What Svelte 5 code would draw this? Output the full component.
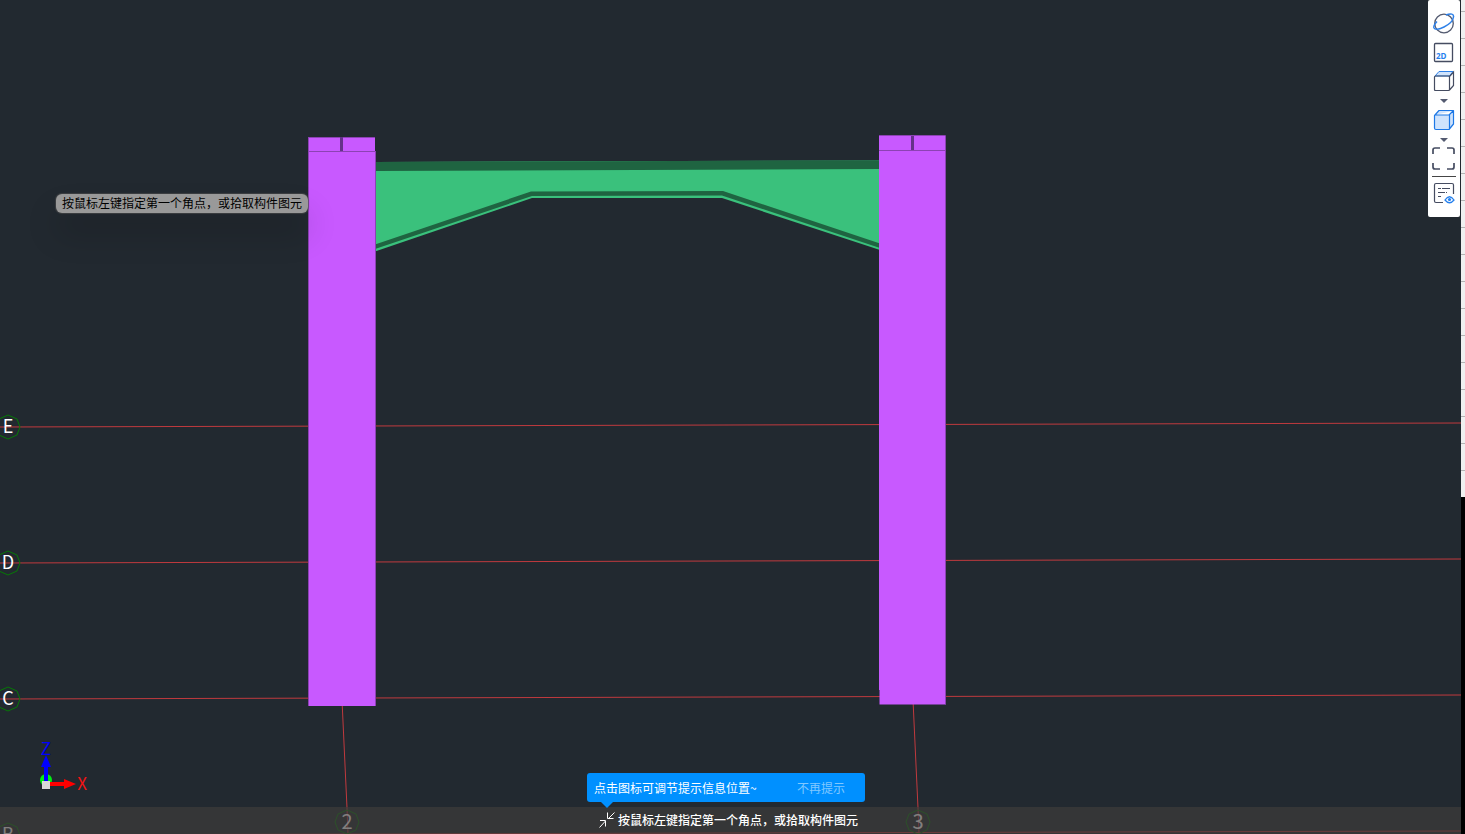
<script>
  let message = '按鼠标左键指定第一个角点，或拾取构件图元'
  let showHint = true

  const rows = [
    { name: 'E', y: 427, end: 423 },
    { name: 'D', y: 563, end: 559 },
    { name: 'C', y: 699, end: 695 },
    { name: 'B', y: 835, end: 831 }
  ]

  const columns = [
    { name: '2', x: 347, top: 342 },
    { name: '3', x: 918, top: 913 }
  ]

  function octagon(cx, cy) {
    return [
      [0, -12], [9, -8], [12, 0], [9, 8],
      [0, 12], [-9, 8], [-12, 0], [-9, -8]
    ].map(([x, y]) => `${cx + x},${cy + y}`).join(' ')
  }
</script>

<main>
  <section class="viewport">
    <svg class="scene" viewBox="0 0 1461 834" preserveAspectRatio="xMinYMin slice" role="img" aria-label="3D">
      <g class="grid">
        {#each rows as row}
          <line x1="0" y1={row.y} x2="1461" y2={row.end} />
        {/each}
        {#each columns as col}
          <line x1={col.top} y1="700" x2={col.x} y2="808" />
          <line x1={col.x} y1="808" x2={col.x + 1} y2="834" />
        {/each}
      </g>

      <g class="bubbles">
        {#each rows as row}
          <polygon points={octagon(8, row.y)} />
          <text x="8" y={row.y + 6}>{row.name}</text>
        {/each}
        {#each columns as col}
          <polygon points={octagon(col.x, 822)} />
          <text class="number" x={col.x} y="829">{col.name}</text>
        {/each}
      </g>

      <!-- haunched beam -->
      <path fill="#3ac17c" d="M375 162 L880 160.500 V250 L722 198 L532 198 L375 251.500 Z" />
      <path fill="#1f6441" d="M375 162 L880 160.500 V169 L375 171 Z" />
      <path fill="#1f6441" d="M375 244.500 L531 191.500 L723 191 L880 243.500 V248 L722 195.500 L532 196 L375 249 Z" />

      <!-- columns -->
      <path fill="#c859ff" d="M308 137 H375 V151 H375.500 V706 H308.500 V691 H308 Z" />
      <path fill="#c859ff" d="M879 135.500 H945.500 V150 H946 V704.500 H879.500 V690 H879 Z" />
      <g fill="none" stroke="#8c42b3">
        <path d="M308 137.500 H375 M308 151.500 H375.500 M375.500 151 V706 M308.500 137 V706" />
        <path d="M879 135.500 H945.500 M879 150.500 H946 M945.500 136 V704" />
      </g>
      <path fill="#65318a" d="M340 137 h3 v14 h-3 z M911 136 h3 v14 h-3 z" />

      <!-- axis gizmo -->
      <circle cx="46" cy="780" r="6" fill="#00ee14" />
      <path fill="#0000ff" d="M44 781 V767 H41 L46 755 L51 767 H48 V781 Z" />
      <path fill="#ff0000" d="M49 782 H64 V779 L76 784 L64 789 V786 H49 Z" />
      <path fill="#d8d8d8" d="M42 781 h8 v8 h-8 z" />
      <text class="axis" x="46" y="755" fill="#0000ff">Z</text>
      <text class="axis" x="82" y="790" fill="#f01414">X</text>
    </svg>

    <div class="tooltip">{message}</div>

    <nav class="toolbar">
      <button class="wide" aria-label="动态观察">
        <svg viewBox="0 0 22 22" width="22" height="22">
          <circle cx="11" cy="11.500" r="9.300" stroke="#535a70" stroke-width="1.300" />
          <path stroke="#2e80e8" stroke-width="1.500" d="M13 3 C18 1 21 2 20.500 5 C20 9 16 12.500 11 15 C6 17.500 2 18 1 16 C0.300 14 2 11.500 4 9.500" />
        </svg>
      </button>
      <button class="wide" aria-label="二维">
        <svg viewBox="0 0 22 22" width="22" height="22">
          <rect x="1.500" y="2.500" width="18" height="18" rx="1" stroke="#454c61" stroke-width="1.300" />
          <text class="flat" x="3" y="18">2D</text>
        </svg>
      </button>
      <button aria-label="视图方向">
        <svg viewBox="0 0 22 22" width="22" height="22">
          <path fill="#cfe3fc" stroke="#2e80e8" d="M2 6 L6 1.500 H20 L16.500 6 Z" />
          <path stroke="#454c61" stroke-width="1.200" d="M2.500 6 H15.500 Q16.500 6 16.500 7 V19.500 Q16.500 20.500 15.500 20.500 H2.500 Q1.500 20.500 1.500 19.500 V7 Q1.500 6 2.500 6 M16.500 20 L20.500 15.500 V2 L16.500 6.500" />
        </svg>
      </button>
      <button class="caret" aria-label="更多视图"></button>
      <button aria-label="显示样式">
        <svg viewBox="0 0 22 22" width="22" height="22">
          <path fill="#cfe3fc" stroke="#1d78e6" stroke-width="1.200" stroke-linejoin="round" d="M1.500 6.500 L6 1.500 H20.500 V15 L16 20.500 H3 Q1.500 20.500 1.500 19 Z M1.500 6 H16 L20 2 M16.500 6 V20" />
        </svg>
      </button>
      <button class="caret" aria-label="更多样式"></button>
      <button aria-label="全屏">
        <svg viewBox="0 0 24 24" width="24" height="24">
          <path stroke="#454c61" stroke-width="1.700" d="M8 1 H3 Q1 1 1 3 V7 M15 1 H20 Q22 1 22 3 V7 M1 16 V20 Q1 22 3 22 H8 M22 16 V20 Q22 22 20 22 H15" />
        </svg>
      </button>
      <hr />
      <button aria-label="显示设置">
        <svg viewBox="0 0 22 22" width="22" height="22">
          <path stroke="#454c61" stroke-width="1.200" d="M10 20.500 H3 Q1.500 20.500 1.500 19 V3 Q1.500 1.500 3 1.500 H19 Q20.500 1.500 20.500 3 V12 M5 6.500 H8 M9 6.500 H17 M5 10.500 H12 M13 10.500 H14 M5 14.500 H8" />
          <path fill="#fff" stroke="#2580ee" stroke-width="1.300" d="M12 18 Q16.500 11.500 21 18 Q16.500 23.500 12 18 Z" />
          <circle cx="16.500" cy="17.500" r="1.600" fill="#2580ee" />
        </svg>
      </button>
    </nav>

    <footer class="status">
      <div class="status-message">
        <button class="dock" aria-label="调节提示信息位置" on:click={() => (showHint = true)}>
          <svg viewBox="0 0 16 16" width="16" height="16">
            <path stroke="#fff" d="M15.500 0.500 L9.500 6.500 M8.500 0.500 V6.500 H14.500 M0.500 15.500 L6.500 9 M1 8.500 H6.500 V14.500" />
          </svg>
        </button>
        <span>{message}</span>
        {#if showHint}
          <div class="hint">
            <span>点击图标可调节提示信息位置~</span>
            <button on:click={() => (showHint = false)}>不再提示</button>
          </div>
        {/if}
      </div>
    </footer>
  </section>
  <aside class="edge"></aside>
</main>

<style>
  :global(body) {
    background: #222930;
  }
  main {
    display: flex;
    height: 100vh;
    overflow: hidden;
    font-family: 'Noto Sans CJK SC', sans-serif;
    font-size: 12px;
  }
  button {
    display: flex;
    align-items: center;
    justify-content: center;
    padding: 0;
    border: 0;
    background: none;
    font: inherit;
    cursor: pointer;
  }
  button svg {
    display: block;
    fill: none;
  }
  .viewport {
    position: relative;
    flex: 1;
    display: flex;
    flex-direction: column;
    justify-content: flex-end;
    background: #222930;
    overflow: hidden;
  }
  .scene {
    position: absolute;
    top: 0;
    left: 0;
    width: 100%;
    height: 100%;
  }
  .grid line {
    stroke: #c03a3e;
  }
  .bubbles polygon {
    fill: none;
    stroke: #067806;
  }
  .bubbles text {
    fill: #fff;
    font-size: 18px;
    text-anchor: middle;
  }
  .bubbles .number {
    font-size: 20px;
  }
  .axis {
    font-size: 17px;
    text-anchor: middle;
  }
  .tooltip {
    position: absolute;
    top: 194px;
    left: 56px;
    padding: 0 6px 1px;
    border-radius: 6px;
    background: #999;
    color: #000;
    line-height: 18px;
    box-shadow: 0 0 1px 1px rgba(80, 80, 80, 0.6), 0 20px 32px rgba(0, 0, 0, 0.2);
  }
  .toolbar {
    position: absolute;
    top: 0;
    right: 1px;
    width: 32px;
    padding: 10px 0 11px;
    border-radius: 2px;
    background: #fff;
  }
  .toolbar button {
    width: 100%;
    height: 26px;
  }
  .toolbar .wide {
    margin-bottom: 3px;
  }
  .toolbar .caret {
    height: 13px;
  }
  .caret::before {
    content: '';
    border: 4px solid transparent;
    border-top-color: #535a70;
    border-bottom: 0;
  }
  .toolbar hr {
    height: 1px;
    margin: 4px 4px 3px;
    border: 0;
    background: #454545;
  }
  .flat {
    fill: #2580ee;
    font-family: 'Open Sans', sans-serif;
    font-size: 8px;
    font-weight: bold;
  }
  .status {
    position: relative;
    display: flex;
    justify-content: center;
    box-sizing: border-box;
    height: 27px;
    padding: 0 4px 2px 0;
    background: rgba(64, 60, 59, 0.66);
    color: #fff;
  }
  .status-message {
    position: relative;
    display: flex;
    align-items: center;
    gap: 3px;
    font-weight: 500;
  }
  .hint {
    position: absolute;
    bottom: 30px;
    left: -12px;
    display: flex;
    align-items: center;
    justify-content: space-between;
    box-sizing: border-box;
    width: 278px;
    height: 29px;
    padding: 0 20px 1px 7px;
    border-radius: 3px;
    background: #0090ff;
    font-weight: 400;
  }
  .hint::after {
    content: '';
    position: absolute;
    top: 100%;
    left: 14px;
    border: 6px solid transparent;
    border-top-color: #0090ff;
    border-bottom: 0;
  }
  .hint button {
    color: #80c8ff;
  }
  .edge {
    width: 4px;
    background:
      linear-gradient(#000, #000) 0 497px / 100% 100% no-repeat,
      repeating-linear-gradient(#f0f0f0 0 11px, #b4b4b4 11px 12px, #f0f0f0 12px 27px);
  }
</style>
